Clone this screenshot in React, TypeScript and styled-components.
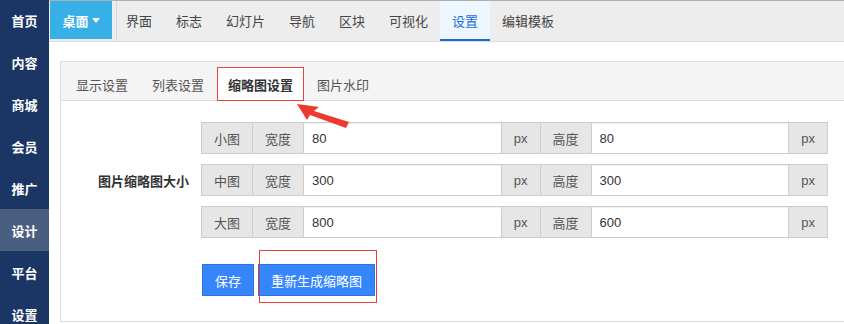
import React from 'react'
import styled, { createGlobalStyle } from 'styled-components'

const GlobalStyle = createGlobalStyle`
  html, body {
    margin: 0;
    padding: 0;
    background: #fff;
    font-family: "Liberation Sans", "Noto Sans CJK SC", sans-serif;
    font-size: 13px;
    color: #333;
  }
  * { box-sizing: border-box; }
`

const sideItems = ['首页', '内容', '商城', '会员', '推广', '设计', '平台', '设置']
const navItems = ['界面', '标志', '幻灯片', '导航', '区块', '可视化', '设置', '编辑模板']
const tabs = ['显示设置', '列表设置', '缩略图设置', '图片水印']
const sizes = [
  { name: '小图', w: '80', h: '80' },
  { name: '中图', w: '300', h: '300' },
  { name: '大图', w: '800', h: '600' },
]

const App: React.FC = () => {
  return (
    <Page>
      <GlobalStyle />
      <Sidebar>
        {sideItems.map((s) => (
          <SideItem key={s} active={s === '设计'}>{s}</SideItem>
        ))}
      </Sidebar>
      <Main>
        <TopBar>
          <DeskButton>
            桌面
            <Caret />
          </DeskButton>
          <Divider />
          <NavList>
            {navItems.map((n) => (
              <NavItem key={n} active={n === '设置'}>{n}</NavItem>
            ))}
          </NavList>
        </TopBar>
        <Content>
          <Panel>
            <TabBar>
              {tabs.map((t) => (
                <Tab key={t} active={t === '缩略图设置'}>{t}</Tab>
              ))}
            </TabBar>
            {/* red pointer drawn over the active tab */}
            <Arrow width="60" height="28" viewBox="0 0 60 28">
              <polygon points="1,2 23,5 18,9 53,20 50,26 14,13 11,18" fill="#ec3a2f" />
            </Arrow>
            <Form>
              <FieldLabel>图片缩略图大小</FieldLabel>
              <Rows>
                {sizes.map((s) => (
                  <InputGroup key={s.name}>
                    <Addon>{s.name}</Addon>
                    <Addon>宽度</Addon>
                    <Field defaultValue={s.w} />
                    <Addon>px</Addon>
                    <Addon>高度</Addon>
                    <Field defaultValue={s.h} />
                    <Addon>px</Addon>
                  </InputGroup>
                ))}
              </Rows>
            </Form>
            <Actions>
              <Button>保存</Button>
              <Marked>
                <Button>重新生成缩略图</Button>
                <RedBox />
              </Marked>
            </Actions>
          </Panel>
        </Content>
      </Main>
    </Page>
  )
}

const Page = styled.div`
  display: flex;
  width: 844px;
  height: 324px;
  overflow: hidden;
`

const Sidebar = styled.div`
  width: 49px;
  flex-shrink: 0;
  background: #1b3664;
  display: flex;
  flex-direction: column;
  padding-top: 0;
  margin-top: -1px;
`

const SideItem = styled.div<{ active?: boolean }>`
  height: 42px;
  flex-shrink: 0;
  display: flex;
  align-items: center;
  justify-content: center;
  color: #fff;
  font-weight: bold;
  background: ${(p) => (p.active ? '#4a5e80' : 'transparent')};
`

const Main = styled.div`
  flex: 1;
  min-width: 0;
  display: flex;
  flex-direction: column;
`

const TopBar = styled.div`
  height: 42px;
  flex-shrink: 0;
  display: flex;
  align-items: stretch;
  background: #ededed;
  border-top: 1px solid #b0b0b0;
  border-bottom: 1px solid #dadada;
`

const DeskButton = styled.div`
  width: 62px;
  height: 38px;
  margin-left: 1px;
  background: #36b0e6;
  color: #fff;
  font-weight: bold;
  display: flex;
  align-items: center;
  justify-content: center;
  gap: 3px;
`

const Caret = styled.span`
  width: 0;
  height: 0;
  border-left: 4px solid transparent;
  border-right: 4px solid transparent;
  border-top: 5px solid #fff;
`

const Divider = styled.div`
  width: 1px;
  margin-left: 4px;
  background: #d8d8d8;
`

const NavList = styled.div`
  display: flex;
  margin-left: -3px;
`

const NavItem = styled.div<{ active?: boolean }>`
  padding: 0 12px;
  display: flex;
  align-items: center;
  color: ${(p) => (p.active ? '#1f6fd8' : '#444')};
  background: ${(p) => (p.active ? '#eef6ff' : 'transparent')};
  border-bottom: 2px solid ${(p) => (p.active ? '#1f6bd6' : 'transparent')};
  margin-bottom: -1px;
  height: 40px;
`

const Content = styled.div`
  flex: 1;
  padding: 19px 0 0 11px;
  overflow: hidden;
`

const Panel = styled.div`
  position: relative;
  width: 820px;
  height: 261px;
  border: 1px solid #dcdcdc;
`

const TabBar = styled.div`
  height: 39px;
  background: #f4f4f4;
  border-bottom: 1px solid #dcdcdc;
  display: flex;
  align-items: flex-end;
  padding-left: 4px;
  gap: 2px;
`

const Tab = styled.div<{ active?: boolean }>`
  height: 34px;
  margin-bottom: -1px;
  padding: 0 10px;
  display: flex;
  align-items: center;
  border: 1px solid ${(p) => (p.active ? '#e9473d' : 'transparent')};
  background: ${(p) => (p.active ? '#fff' : 'transparent')};
  font-weight: ${(p) => (p.active ? 'bold' : 'normal')};
  color: ${(p) => (p.active ? '#333' : '#555')};
`

const Arrow = styled.svg`
  position: absolute;
  left: 235px;
  top: 40px;
`

const Form = styled.div`
  display: flex;
  align-items: center;
  padding-top: 21px;
`

const FieldLabel = styled.div`
  width: 140px;
  padding-right: 12px;
  text-align: right;
  font-weight: bold;
  color: #333;
`

const Rows = styled.div`
  display: flex;
  flex-direction: column;
  gap: 10px;
`

const InputGroup = styled.div`
  width: 627px;
  height: 32px;
  display: flex;
`

const Addon = styled.div`
  flex-shrink: 0;
  padding: 0 12px;
  min-width: 39px;
  display: flex;
  align-items: center;
  justify-content: center;
  background: #e6e6e6;
  border: 1px solid #cccccc;
  margin-left: -1px;
  color: #555;
  &:first-child { margin-left: 0; }
`

const Field = styled.input`
  flex: 1;
  min-width: 0;
  height: 32px;
  margin-left: -1px;
  border: 1px solid #cccccc;
  padding: 0 8px;
  font: inherit;
  color: #333;
  outline: none;
  box-shadow: inset 0 1px 1px rgba(0, 0, 0, 0.06);
`

const Actions = styled.div`
  display: flex;
  gap: 4px;
  padding: 26px 0 0 141px;
`

const Button = styled.button`
  height: 32px;
  padding: 0 12px;
  border: 1px solid #2c74e6;
  background: #3585fb;
  color: #fff;
  font: inherit;
`

const Marked = styled.span`
  position: relative;
  display: inline-flex;
`

const RedBox = styled.span`
  position: absolute;
  left: 1px;
  right: -2px;
  top: -14px;
  bottom: -7px;
  border: 1px solid #e53f3a;
  pointer-events: none;
`

export default App
